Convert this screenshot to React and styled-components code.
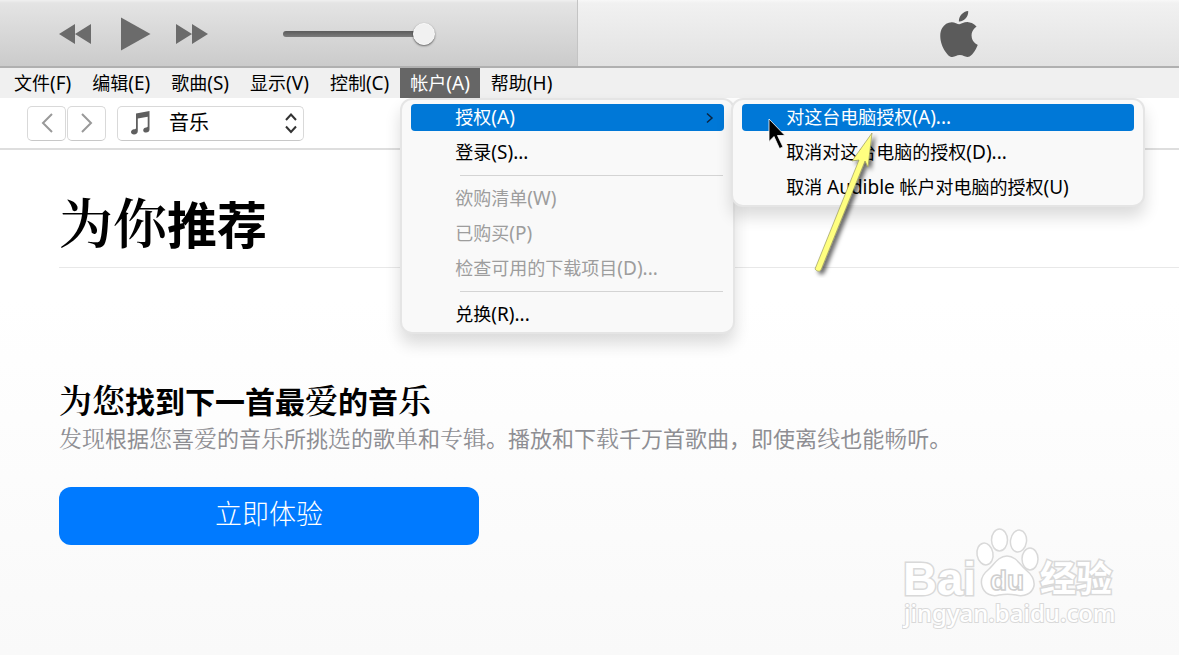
import React from "react";
import styled, { createGlobalStyle, css } from "styled-components";
import { SiApple } from "react-icons/si";

const GlobalStyle = createGlobalStyle`
  * {
    box-sizing: border-box;
  }

  body {
    margin: 0;
    background: #f9f9f9;
    color: #000;
    font-family: "Noto Sans", "Noto Sans CJK SC", sans-serif;
    font-size: 18px;
  }

  button, select, input {
    font: inherit;
    color: inherit;
    margin: 0;
  }
`;

const Page = styled.div`
  position: relative;
  display: flex;
  flex-direction: column;
  min-height: 100vh;
  overflow: hidden;
  background: linear-gradient(#fff 0, #fff 300px, #f9f9f9 100%);
`;

/* --- Player bar --- */
const PlayerBar = styled.header`
  display: flex;
  height: 68px;
  border-bottom: 2px solid #b0b0b0;
`;

const Controls = styled.div`
  display: flex;
  align-items: center;
  width: 49%;
  padding: 2px 0 0 58px;
  background: linear-gradient(#f0f0f0 0, #e4e4e4 3px, #cbcbcb 100%);
  border-right: 1px solid #c4c4c4;
`;

const PlayerButton = styled.button`
  display: flex;
  padding: 0;
  border: 0;
  background: none;
  color: #6b6b6b;
  margin-right: ${(p) => p.$gap || 0}px;
`;

const Volume = styled.input`
  appearance: none;
  width: 152px;
  height: 24px;
  background: none;

  &::-webkit-slider-runnable-track {
    height: 6px;
    border-radius: 3px;
    background: linear-gradient(#5c5c5c, #7c7c7c);
  }

  &::-webkit-slider-thumb {
    appearance: none;
    width: 22px;
    height: 22px;
    margin-top: -8px;
    border: 1px solid #fafafa;
    border-radius: 50%;
    background: #f1f1f1;
    box-shadow: 0 1px 2px rgba(0, 0, 0, 0.5);
  }
`;

const NowPlaying = styled.div`
  display: flex;
  flex: 1;
  align-items: center;
  padding: 2px 0 0 358px;
  background: linear-gradient(#f8f8f8 0, #f1f1f1 3px, #e2e2e2 100%);
  color: #5b5b5b;
`;

/* --- Menu bar --- */
const MenuBar = styled.ul`
  display: flex;
  gap: 1px;
  height: 30px;
  margin: 0;
  padding: 0 0 0 4px;
  list-style: none;
  background: #f0f0f0;
`;

const MenuBarItem = styled.li`
  position: relative;
`;

const MenuBarButton = styled.button`
  height: 30px;
  padding: 0 10px;
  border: 0;
  line-height: 30px;
  white-space: nowrap;
  background: ${(p) => (p.$open ? "#666" : "none")};
  color: ${(p) => (p.$open ? "#fff" : "#000")};
`;

const Latin = styled.span`
  font-size: 19px;
  line-height: 1;
`;

const Popup = styled.ul`
  position: absolute;
  z-index: 2;
  top: ${(p) => (p.$sub ? "-6px" : "30px")};
  left: ${(p) => (p.$sub ? "calc(100% + 7px)" : "0")};
  display: flex;
  flex-direction: column;
  gap: 8px;
  width: ${(p) => p.$width}px;
  margin: 0;
  padding: 4px 9px;
  border: 2px solid #e5e5e5;
  border-radius: 12px;
  list-style: none;
  background: #f9f9f9;
  box-shadow: 0 10px 16px rgba(0, 0, 0, 0.14);
`;

const PopupItem = styled.li`
  position: relative;
`;

const PopupButton = styled.button`
  display: flex;
  align-items: center;
  justify-content: space-between;
  width: 100%;
  height: 27px;
  padding: 0 9px 0 44px;
  border: 0;
  border-radius: 4px;
  line-height: 27px;
  white-space: nowrap;
  background: none;

  &:disabled {
    color: #9d9d9d;
  }

  ${(p) =>
    p.$active &&
    css`
      background: #0078d7;
      color: #fff;
    `}
`;

const Separator = styled.li`
  height: 1px;
  margin: 1px 1px 1px 49px;
  background: #d4d4d4;
`;

/* --- Navigation row --- */
const NavRow = styled.nav`
  display: flex;
  align-items: center;
  gap: 11px;
  height: 52px;
  padding-left: 27px;
  border-bottom: 2px solid #dedede;
  background: #fff;
`;

const NavButtons = styled.div`
  display: flex;
  gap: 1px;
`;

const NavButton = styled.button`
  display: flex;
  align-items: center;
  justify-content: center;
  width: 39px;
  height: 35px;
  padding: 0;
  border: 1px solid #d9d9d9;
  border-bottom-color: #c8c8c8;
  border-radius: 5px;
  background: #fff;
  color: #999;
`;

const LibraryPicker = styled.label`
  position: relative;
  display: flex;

  svg {
    position: absolute;
    top: 5px;
    pointer-events: none;
  }

  svg:first-child {
    left: 13px;
  }

  svg:last-child {
    right: 7px;
  }
`;

const LibrarySelect = styled.select`
  appearance: none;
  width: 187px;
  height: 35px;
  padding: 0 30px 2px 51px;
  border: 1px solid #d9d9d9;
  border-bottom-color: #c8c8c8;
  border-radius: 5px;
  background: #fff;
  font-size: 20px;
`;

/* --- Content --- */
const Content = styled.main`
  padding-left: 59px;
`;

const Title = styled.h1`
  margin: 0;
  padding: 35px 0 6px;
  border-bottom: 1px solid #e8e8e8;
  font-size: 50px;
  line-height: 72px;
`;

const Offer = styled.section`
  padding-top: 110px;
`;

const OfferTitle = styled.h2`
  margin: 0;
  font-size: 30px;
  line-height: 42px;
`;

const OfferText = styled.p`
  margin: 0;
  color: #8e8e93;
  font-size: 22px;
  line-height: 30px;
`;

const Thin = styled.span`
  font-family: "Noto Serif CJK SC", "Noto Sans CJK SC", serif;
  font-size: ${(p) => p.$size}px;
  font-weight: ${(p) => p.$weight || 400};
`;

const TryButton = styled.button`
  display: block;
  width: 420px;
  height: 58px;
  margin-top: 34px;
  padding: 0 0 4px;
  border: 0;
  border-radius: 12px;
  background: #007aff;
  color: #fff;
  font-size: 27px;
  font-weight: 300;
  line-height: 54px;
`;

/* --- Things lying over the page --- */
const Pointer = styled.svg`
  position: absolute;
  z-index: 3;
  top: 118px;
  left: 767px;
  pointer-events: none;
`;

const Watermark = styled.svg`
  position: absolute;
  right: 57px;
  bottom: 20px;
  pointer-events: none;
`;

const menus = ["文件(F)", "编辑(E)", "歌曲(S)", "显示(V)", "控制(C)", "帐户(A)", "帮助(H)"];

// Latin letters are set a little larger than the Chinese ones
const Label = ({ text }) => (
  <span>
    {text
      .split(/([\x21-\x7e]+)/)
      .map((part, i) => (i % 2 ? <Latin key={i}>{part}</Latin> : part))}
  </span>
);

const AuthorizeMenu = () => (
  <Popup $sub $width={414}>
    <PopupItem>
      <PopupButton $active>
        <Label text="对这台电脑授权(A)..." />
      </PopupButton>
    </PopupItem>
    <PopupItem>
      <PopupButton>
        <Label text="取消对这台电脑的授权(D)..." />
      </PopupButton>
    </PopupItem>
    <PopupItem>
      <PopupButton>
        <Label text="取消 Audible 帐户对电脑的授权(U)" />
      </PopupButton>
    </PopupItem>
  </Popup>
);

const AccountMenu = () => (
  <Popup $width={335}>
    <PopupItem>
      <PopupButton $active>
        <Label text="授权(A)" />
        <svg width="10" height="12" viewBox="0 0 10 12" fill="none" stroke="#0b2540" strokeWidth="1.5">
          <path d="M2 1.5l5 4.5-5 4.5" />
        </svg>
      </PopupButton>
      <AuthorizeMenu />
    </PopupItem>
    <PopupItem>
      <PopupButton>
        <Label text="登录(S)..." />
      </PopupButton>
    </PopupItem>
    <Separator />
    <PopupItem>
      <PopupButton disabled>
        <Label text="欲购清单(W)" />
      </PopupButton>
    </PopupItem>
    <PopupItem>
      <PopupButton disabled>
        <Label text="已购买(P)" />
      </PopupButton>
    </PopupItem>
    <PopupItem>
      <PopupButton disabled>
        <Label text="检查可用的下载项目(D)..." />
      </PopupButton>
    </PopupItem>
    <Separator />
    <PopupItem>
      <PopupButton>
        <Label text="兑换(R)..." />
      </PopupButton>
    </PopupItem>
  </Popup>
);

const App = () => {
  return (
    <Page>
      <GlobalStyle />

      <PlayerBar>
        <Controls>
          <PlayerButton $gap={29} aria-label="上一首">
            <svg width="34" height="20" viewBox="0 0 34 20" fill="currentColor">
              <path d="M17 0v20L1 10zM33 0v20L17 10z" />
            </svg>
          </PlayerButton>
          <PlayerButton $gap={25} aria-label="播放">
            <svg width="30" height="34" viewBox="0 0 30 34" fill="currentColor">
              <path d="M0 0.5L29.5 17 0 33.5z" />
            </svg>
          </PlayerButton>
          <PlayerButton $gap={73} aria-label="下一首">
            <svg width="34" height="20" viewBox="0 0 34 20" fill="currentColor">
              <path d="M0 0v20l16-10zM16 0v20l16-10z" />
            </svg>
          </PlayerButton>
          <Volume type="range" min="0" max="100" defaultValue="100" aria-label="音量" />
        </Controls>
        <NowPlaying>
          <SiApple size={46} />
        </NowPlaying>
      </PlayerBar>

      <MenuBar>
        {menus.map((name) => {
          const open = name === "帐户(A)";
          return (
            <MenuBarItem key={name}>
              <MenuBarButton $open={open}>
                <Label text={name} />
              </MenuBarButton>
              {open && <AccountMenu />}
            </MenuBarItem>
          );
        })}
      </MenuBar>

      <NavRow>
        <NavButtons>
          <NavButton aria-label="后退">
            <svg width="12" height="20" viewBox="0 0 12 20" fill="none" stroke="currentColor" strokeWidth="2">
              <path d="M11 1L2 10l9 9" />
            </svg>
          </NavButton>
          <NavButton aria-label="前进">
            <svg width="12" height="20" viewBox="0 0 12 20" fill="none" stroke="currentColor" strokeWidth="2">
              <path d="M1 1l9 9-9 9" />
            </svg>
          </NavButton>
        </NavButtons>
        <LibraryPicker>
          <svg width="20" height="24" viewBox="0 0 20 24" fill="#5f5f5f">
            <path d="M6 2.5L19.5 0v18.5c0 2-1.5 3-3.400 3-1.700 0-2.900-.9-2.900-2.300 0-1.600 1.400-2.600 3-2.800 1-.1 1.500-.4 1.500-1.200V5.800L7.800 7.600v12.500c0 2.100-1.500 3.400-3.800 3.400-1.700 0-3-1-3-2.400 0-1.600 1.300-2.500 3-2.800 1.300-.2 2-.5 2-1.400z" />
          </svg>
          <LibrarySelect aria-label="资料库" defaultValue="music">
            <option value="music">音乐</option>
          </LibrarySelect>
          <svg width="12" height="24" viewBox="0 0 12 24" fill="none" stroke="#333" strokeWidth="2">
            <path d="M1 9l5-5.500 5 5.500M1 15.500l5 5.500 5-5.500" />
          </svg>
        </LibraryPicker>
      </NavRow>

      <Content>
        <Title>
          <Thin $size={54} $weight={600}>为你</Thin>推荐
        </Title>
        <Offer>
          <OfferTitle>
            <Thin $size={33} $weight={600}>为您</Thin>找到下一首最
            <Thin $size={33} $weight={600}>爱</Thin>的音
            <Thin $size={33} $weight={600}>乐</Thin>
          </OfferTitle>
          <OfferText>
            <Thin $size={23}>发现</Thin>根据<Thin $size={23}>您</Thin>喜<Thin $size={23}>爱</Thin>的音
            <Thin $size={23}>乐</Thin>所挑<Thin $size={23}>选</Thin>的歌<Thin $size={23}>单</Thin>和
            <Thin $size={23}>专辑</Thin>。播放和下<Thin $size={23}>载</Thin>千万首歌曲，即使离
            <Thin $size={23}>线</Thin>也能<Thin $size={23}>畅</Thin>听。
          </OfferText>
          <TryButton>立即体验</TryButton>
        </Offer>
      </Content>

      <Pointer width="120" height="160" viewBox="767 118 120 160">
        <defs>
          <filter id="arrowShadow" x="-20%" y="-20%" width="150%" height="150%">
            <feDropShadow dx="3" dy="3" stdDeviation="2" floodOpacity="0.6" />
          </filter>
        </defs>
        <path
          d="M872 133L868 167 865 161 821 270Q818 273 815 269L859 160 852 161z"
          fill="#ffff80"
          stroke="#8a8a50"
          strokeWidth="0.6"
          filter="url(#arrowShadow)"
        />
        <path
          d="M769 119v22.500l5-5 5.500 12 3.500-1.500-5.500-11.500h7.500z"
          fill="#000"
          stroke="#fff"
          strokeWidth="0.8"
        />
      </Pointer>

      <Watermark width="220" height="110" viewBox="902 525 220 110" fill="#fff" stroke="#d9d9d9">
        <g fontFamily="Liberation Sans, Noto Sans CJK SC, sans-serif" fontWeight="700" paintOrder="stroke" strokeWidth="3">
          <text x="903" y="595" fontSize="47">Bai</text>
          <text x="1040" y="592" fontSize="36" fontFamily="Noto Sans CJK SC">经验</text>
        </g>
        <g strokeWidth="1.5">
          <ellipse cx="985" cy="554" rx="8" ry="11" transform="rotate(-10 985 554)" />
          <ellipse cx="999.500" cy="540" rx="8" ry="11" />
          <ellipse cx="1018.500" cy="541" rx="8" ry="11" transform="rotate(8 1018 541)" />
          <ellipse cx="1030" cy="559" rx="8" ry="11" />
          <path d="M1007 556c-9 0-13 9-19 14-5 4-8 9-6 16 2 8 10 11 17 9 6-1 11-1 17 0 8 2 16-1 18-9 1-7-3-12-8-16-6-5-10-14-19-14z" />
        </g>
        <text x="990" y="590" fontSize="28" fontFamily="Liberation Sans" fontWeight="700" stroke="#cfcfcf" strokeWidth="1.5">du</text>
        <text x="904" y="622" fontSize="24" fontFamily="Noto Sans, sans-serif" fontWeight="500" paintOrder="stroke" strokeWidth="2">
          jingyan.baidu.com
        </text>
      </Watermark>
    </Page>
  );
};

export default App;
